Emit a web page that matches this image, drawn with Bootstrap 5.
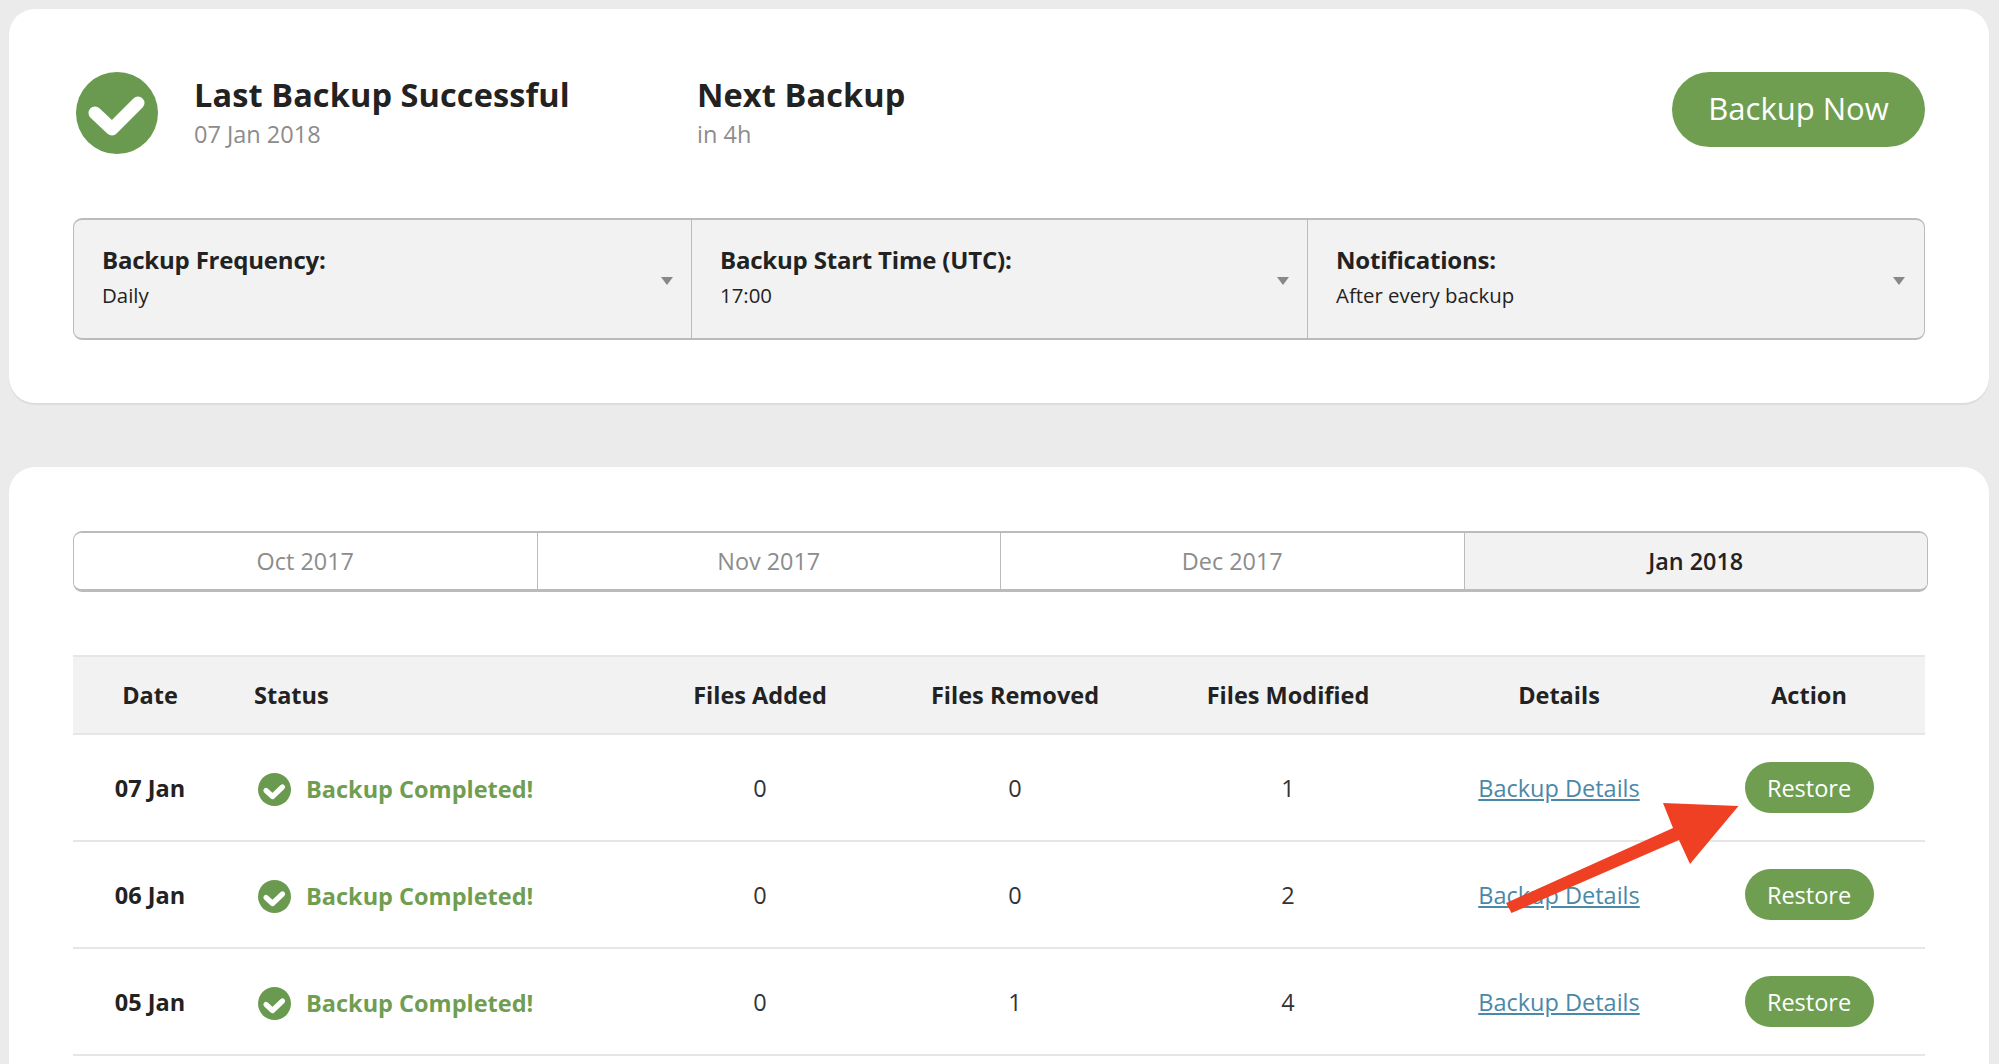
<!DOCTYPE html>
<html lang="en">
<head>
<meta charset="utf-8">
<title>Backups</title>
<link href="https://cdn.jsdelivr.net/npm/bootstrap@5.3.0/dist/css/bootstrap.min.css" rel="stylesheet">
<style>
html,body{height:100%;}
body{background:#ebebeb;font-family:"Open Sans","Noto Sans",sans-serif;color:#222;padding:9px 10px 0 9px;overflow:hidden;position:relative;}
.panel{background:#fff;border:0;border-radius:26px;box-shadow:0 2px 1px #dcdcdc;}
.panel-top{height:394px;padding:63px 64px 0 64px;margin-bottom:64px;}
.panel-bottom{height:640px;padding:64px 64px 0 64px;border-bottom-left-radius:0;border-bottom-right-radius:0;box-shadow:none;}
.summary{height:82px;margin-left:3px;}
.bigcheck{width:82px;height:82px;flex:none;}
.sum-a{width:539px;padding-left:36px;}
.sum-title{font-size:32.5px;font-weight:700;line-height:40px;margin:3px 0 0;letter-spacing:.1px;}
.sum-sub{font-size:23.5px;line-height:30px;color:#8c8c8c;margin-top:4px;font-weight:400;}
.btn-green{background:#6f9e51;border:0;color:#fff;border-radius:38px;}
.btn-green:hover{background:#6f9e51;color:#fff;}
.btn-now{width:253px;height:75px;font-size:31px;padding:0 0 2px;align-self:flex-start;}
.settings{margin-top:64px;height:122px;background:#f2f2f2;border:1px solid #bbb;border-top-width:2px;border-bottom-width:2px;border-radius:9px;}
.setting{flex:none;width:618px;position:relative;padding:24px 0 0 28px;border-right:1px solid #bbb;}
.setting + .setting{width:616px;}
.setting:last-child{border-right:0;flex:1 1 0;width:auto;}
.setting b{display:block;font-size:24px;font-weight:700;line-height:32px;letter-spacing:-.2px;}
.setting span{display:block;font-size:20.4px;line-height:26px;margin-top:6px;}
.setting::after{content:"";position:absolute;right:18px;top:57px;border-left:6px solid transparent;border-right:6px solid transparent;border-top:8px solid #888;}
.setting:last-child::after{right:19px;}
.months{height:61px;width:1855px;border:1px solid #bbb;border-top-width:2px;border-bottom-width:3px;border-radius:9px;overflow:hidden;}
.month{flex:1 1 0;display:flex;align-items:center;justify-content:center;font-size:23.4px;color:#8c8c8c;border-right:1px solid #bbb;background:#fff;padding-top:2px;}
.month:last-child{border-right:0;}
.month.on{background:#f2f2f2;color:#222;font-weight:600;}
.tbl{table-layout:fixed;width:1852px;margin:63px 0 0;font-size:23.5px;--bs-table-color:#222;border-top:2px solid #e6e6e6;}
.tbl th{background:#f2f2f2;font-weight:700;height:78px;padding:2px 0 0;vertical-align:middle;text-align:center;border-bottom:2px solid #e6e6e6;box-shadow:none;}
.tbl td{height:107px;padding:2px 0 0;vertical-align:middle;text-align:center;border-bottom:2px solid #e6e6e6;color:#333;box-shadow:none;}
.tbl td.act{padding:0;}
.tbl th.stat{text-align:left;padding-left:27px;}
.tbl td.stat{text-align:left;padding-left:31px;}
.tbl td.dt{font-weight:700;color:#222;}
.okline{color:#6f9e51;font-weight:700;gap:15px;margin-top:3px;}
.smallcheck{width:33px;height:33px;flex:none;margin-top:-1px;}
.tbl a{color:#4a88a8;}
.btn-restore{width:129px;height:51px;font-size:23.5px;padding:2px 0 0;}
.arrow{position:absolute;left:0;top:0;pointer-events:none;}
</style>
</head>
<body>
<div class="card panel panel-top">
  <div class="d-flex summary">
    <svg class="bigcheck" viewBox="0 0 82 82"><circle cx="41" cy="41" r="41" fill="#699a4f"/><path d="M19 41 L36 57 L62 31" fill="none" stroke="#fff" stroke-width="13" stroke-linejoin="round" stroke-linecap="round"/></svg>
    <div class="sum-a">
      <div class="sum-title">Last Backup Successful</div>
      <div class="sum-sub">07 Jan 2018</div>
    </div>
    <div class="flex-grow-1">
      <div class="sum-title">Next Backup</div>
      <div class="sum-sub">in 4h</div>
    </div>
    <button class="btn btn-green btn-now">Backup Now</button>
  </div>
  <div class="d-flex settings">
    <div class="setting"><b>Backup Frequency:</b><span>Daily</span></div>
    <div class="setting"><b>Backup Start Time (UTC):</b><span>17:00</span></div>
    <div class="setting"><b>Notifications:</b><span>After every backup</span></div>
  </div>
</div>
<div class="card panel panel-bottom">
  <div class="d-flex months">
    <div class="month">Oct 2017</div>
    <div class="month">Nov 2017</div>
    <div class="month">Dec 2017</div>
    <div class="month on">Jan 2018</div>
  </div>
  <table class="table tbl">
    <colgroup><col style="width:154px"><col style="width:414px"><col style="width:238px"><col style="width:272px"><col style="width:274px"><col style="width:268px"><col style="width:232px"></colgroup>
    <thead><tr><th>Date</th><th class="stat">Status</th><th>Files Added</th><th>Files Removed</th><th>Files Modified</th><th>Details</th><th>Action</th></tr></thead>
    <tbody>
      <tr><td class="dt">07 Jan</td><td class="stat"><div class="d-flex align-items-center okline"><svg class="smallcheck" viewBox="0 0 33 33"><circle cx="16.5" cy="16.5" r="16.5" fill="#699a4f"/><path d="M8 17.5 L14.5 23.5 L24.5 14" fill="none" stroke="#fff" stroke-width="5.2" stroke-linejoin="round" stroke-linecap="round"/></svg>Backup Completed!</div></td><td>0</td><td>0</td><td>1</td><td><a href="#">Backup Details</a></td><td class="act"><button class="btn btn-green btn-restore">Restore</button></td></tr>
      <tr><td class="dt">06 Jan</td><td class="stat"><div class="d-flex align-items-center okline"><svg class="smallcheck" viewBox="0 0 33 33"><circle cx="16.5" cy="16.5" r="16.5" fill="#699a4f"/><path d="M8 17.5 L14.5 23.5 L24.5 14" fill="none" stroke="#fff" stroke-width="5.2" stroke-linejoin="round" stroke-linecap="round"/></svg>Backup Completed!</div></td><td>0</td><td>0</td><td>2</td><td><a href="#">Backup Details</a></td><td class="act"><button class="btn btn-green btn-restore">Restore</button></td></tr>
      <tr><td class="dt">05 Jan</td><td class="stat"><div class="d-flex align-items-center okline"><svg class="smallcheck" viewBox="0 0 33 33"><circle cx="16.5" cy="16.5" r="16.5" fill="#699a4f"/><path d="M8 17.5 L14.5 23.5 L24.5 14" fill="none" stroke="#fff" stroke-width="5.2" stroke-linejoin="round" stroke-linecap="round"/></svg>Backup Completed!</div></td><td>0</td><td>1</td><td>4</td><td><a href="#">Backup Details</a></td><td class="act"><button class="btn btn-green btn-restore">Restore</button></td></tr>
    </tbody>
  </table>
</div>
<svg class="arrow" width="1999" height="1064" viewBox="0 0 1999 1064"><polygon points="1738.5,806 1663,803 1673,828 1506,903 1511.5,913 1679,840 1690,864" fill="#f04023"/></svg>
</body>
</html>
